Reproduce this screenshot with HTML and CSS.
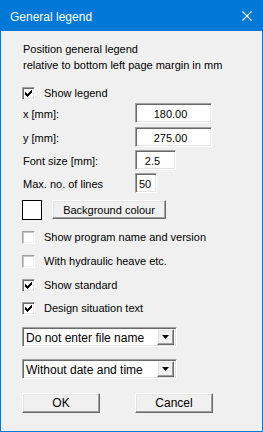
FILE: index.html
```html
<!DOCTYPE html>
<html>
<head>
<meta charset="utf-8">
<link rel="stylesheet" href="styles.css">
</head>
<body>
<div class="win">
  <div class="titlebar">
    <span class="title">General legend</span>
    <svg class="close" width="10" height="10" viewBox="0 0 10 10"><path d="M0.5 0.5 L9.5 9.5 M9.5 0.5 L0.5 9.5" stroke="#fff" stroke-width="1.1" fill="none"/></svg>
  </div>
  <div class="content">
    <div class="intro">
      <div>Position general legend</div>
      <div>relative to bottom left page margin in mm</div>
    </div>

    <label class="chk r-show"><span class="box checked"><svg width="7" height="7" viewBox="0 0 7 7"><rect x="0" y="2" width="1" height="3"/><rect x="1" y="3" width="1" height="3"/><rect x="2" y="4" width="1" height="3"/><rect x="3" y="3" width="1" height="3"/><rect x="4" y="2" width="1" height="3"/><rect x="5" y="1" width="1" height="3"/><rect x="6" y="0" width="1" height="3"/></svg></span><span class="lbl">Show legend</span></label>

    <div class="frow r-x"><span class="flabel">x [mm]:</span><div class="edit w77">180.00</div></div>
    <div class="frow r-y"><span class="flabel">y [mm]:</span><div class="edit w77">275.00</div></div>
    <div class="frow r-fs"><span class="flabel">Font size [mm]:</span><div class="edit w41">2.5</div></div>
    <div class="frow r-ml"><span class="flabel">Max. no. of lines</span><div class="edit w22 left">50</div></div>

    <div class="colrow">
      <span class="swatch"></span>
      <div class="btn bgbtn">Background colour</div>
    </div>

    <label class="chk r-c1"><span class="box"></span><span class="lbl">Show program name and version</span></label>
    <label class="chk r-c2"><span class="box"></span><span class="lbl">With hydraulic heave etc.</span></label>
    <label class="chk r-c3"><span class="box checked"><svg width="7" height="7" viewBox="0 0 7 7"><rect x="0" y="2" width="1" height="3"/><rect x="1" y="3" width="1" height="3"/><rect x="2" y="4" width="1" height="3"/><rect x="3" y="3" width="1" height="3"/><rect x="4" y="2" width="1" height="3"/><rect x="5" y="1" width="1" height="3"/><rect x="6" y="0" width="1" height="3"/></svg></span><span class="lbl">Show standard</span></label>
    <label class="chk r-c4"><span class="box checked"><svg width="7" height="7" viewBox="0 0 7 7"><rect x="0" y="2" width="1" height="3"/><rect x="1" y="3" width="1" height="3"/><rect x="2" y="4" width="1" height="3"/><rect x="3" y="3" width="1" height="3"/><rect x="4" y="2" width="1" height="3"/><rect x="5" y="1" width="1" height="3"/><rect x="6" y="0" width="1" height="3"/></svg></span><span class="lbl">Design situation text</span></label>

    <div class="combo r-d1"><span class="ctext">Do not enter file name</span><span class="arrow"><svg width="7" height="4" viewBox="0 0 7 4"><path d="M0 0 H7 L3.5 4 Z" fill="#000"/></svg></span></div>
    <div class="combo r-d2"><span class="ctext">Without date and time</span><span class="arrow"><svg width="7" height="4" viewBox="0 0 7 4"><path d="M0 0 H7 L3.5 4 Z" fill="#000"/></svg></span></div>

    <div class="btnrow">
      <div class="btn okbtn">OK</div>
      <div class="btn cbtn">Cancel</div>
    </div>
  </div>
</div>
</body>
</html>
```

FILE: styles.css
```css
* { box-sizing: border-box; }
html, body { margin: 0; padding: 0; }
body { width: 263px; height: 432px; overflow: hidden; font-family: "Liberation Sans", Arial, sans-serif; font-size: 11px; color: #000; }

.win {
  width: 263px; height: 432px;
  border: 1px solid #0078d7;
  background: #f0f0f0;
  display: flex; flex-direction: column;
}
.titlebar {
  height: 30px; background: #0078d7; color: #fff;
  display: flex; align-items: center; justify-content: space-between;
  padding: 1px 10px 0 9px;
  font-family: "Liberation Sans", Arial, sans-serif; font-size: 12px;
}
.close { display: block; margin-top: -2px; }

.content {
  padding-left: 21px;
  display: flex; flex-direction: column; align-items: flex-start;
}
.intro { margin-top: 10px; line-height: 16px; padding-left: 1px; }

.chk { display: flex; align-items: center; height: 16px; }
.box {
  width: 13px; height: 13px; background: #fff;
  border: 1px solid; border-color: #a0a0a0 #fff #fff #a0a0a0;
  box-shadow: inset 1px 1px 0 #696969, inset -1px -1px 0 #e3e3e3;
  display: flex; align-items: center; justify-content: center;
  padding-left: 0px;
}
.box.plain { }
.box:not(.checked) {
  border-color: #a0a0a0 #fff #fff #a0a0a0;
  box-shadow: inset 1px 1px 0 #c8c8c8, inset -1px -1px 0 #f0f0f0;
}
.box svg { display: block; fill: #000; }
.lbl { margin-left: 9px; }

.r-show { margin-top: 12px; }

.frow { display: flex; align-items: center; height: 20px; }
.flabel { width: 113px; padding-left: 1px; padding-top: 2px; }
.edit {
  height: 20px; background: #fff;
  border: 1px solid; border-color: #a0a0a0 #fff #fff #a0a0a0;
  box-shadow: inset 1px 1px 0 #696969, inset -1px -1px 0 #e3e3e3;
  line-height: 18px; text-align: center; padding-top: 1px;
}
.w77 { width: 77px; padding-right: 6px; }
.w41 { width: 41px; padding-right: 6px; }
.w22 { width: 22px; }
.edit.left { text-align: left; padding-left: 3px; }

.r-x { margin-top: 2px; }
.r-y { margin-top: 4px; }
.r-fs { margin-top: 3px; }
.r-ml { margin-top: 3px; }

.colrow { display: flex; align-items: flex-start; margin-top: 7px; }
.swatch { width: 20px; height: 20px; background: #fff; border: 1px solid #000; display: block; }
.btn {
  height: 20px; background: #f0f0f0;
  border: 1px solid; border-color: #fff #696969 #696969 #fff;
  box-shadow: inset -1px -1px 0 #a0a0a0, inset 1px 1px 0 #e3e3e3;
  display: flex; align-items: center; justify-content: center;
}
.bgbtn { width: 114px; height: 19px; margin-left: 10px; }

.r-c1 { margin-top: 9px; }
.r-c2 { margin-top: 8px; }
.r-c3 { margin-top: 8px; }
.r-c4 { margin-top: 7px; }

.combo {
  width: 155px; height: 20px; background: #fff;
  border: 1px solid; border-color: #a0a0a0 #fff #fff #a0a0a0;
  box-shadow: inset 1px 1px 0 #696969, inset -1px -1px 0 #e3e3e3;
  display: flex; align-items: center; justify-content: space-between;
  padding: 2px 2px 2px 3px;
  font-size: 12px;
}
.ctext { padding-top: 1px; }
.arrow {
  width: 17px; height: 16px; background: #f0f0f0;
  border: 1px solid; border-color: #fff #696969 #696969 #fff;
  box-shadow: inset -1px -1px 0 #a0a0a0, inset 1px 1px 0 #e3e3e3;
  display: flex; align-items: center; justify-content: center;
}
.arrow svg { display: block; }
.r-d1 { margin-top: 11px; }
.r-d2 { margin-top: 12px; }

.btnrow { display: flex; margin-top: 14px; gap: 35px; }
.okbtn, .cbtn { width: 78px; font-size: 12px; }
```
